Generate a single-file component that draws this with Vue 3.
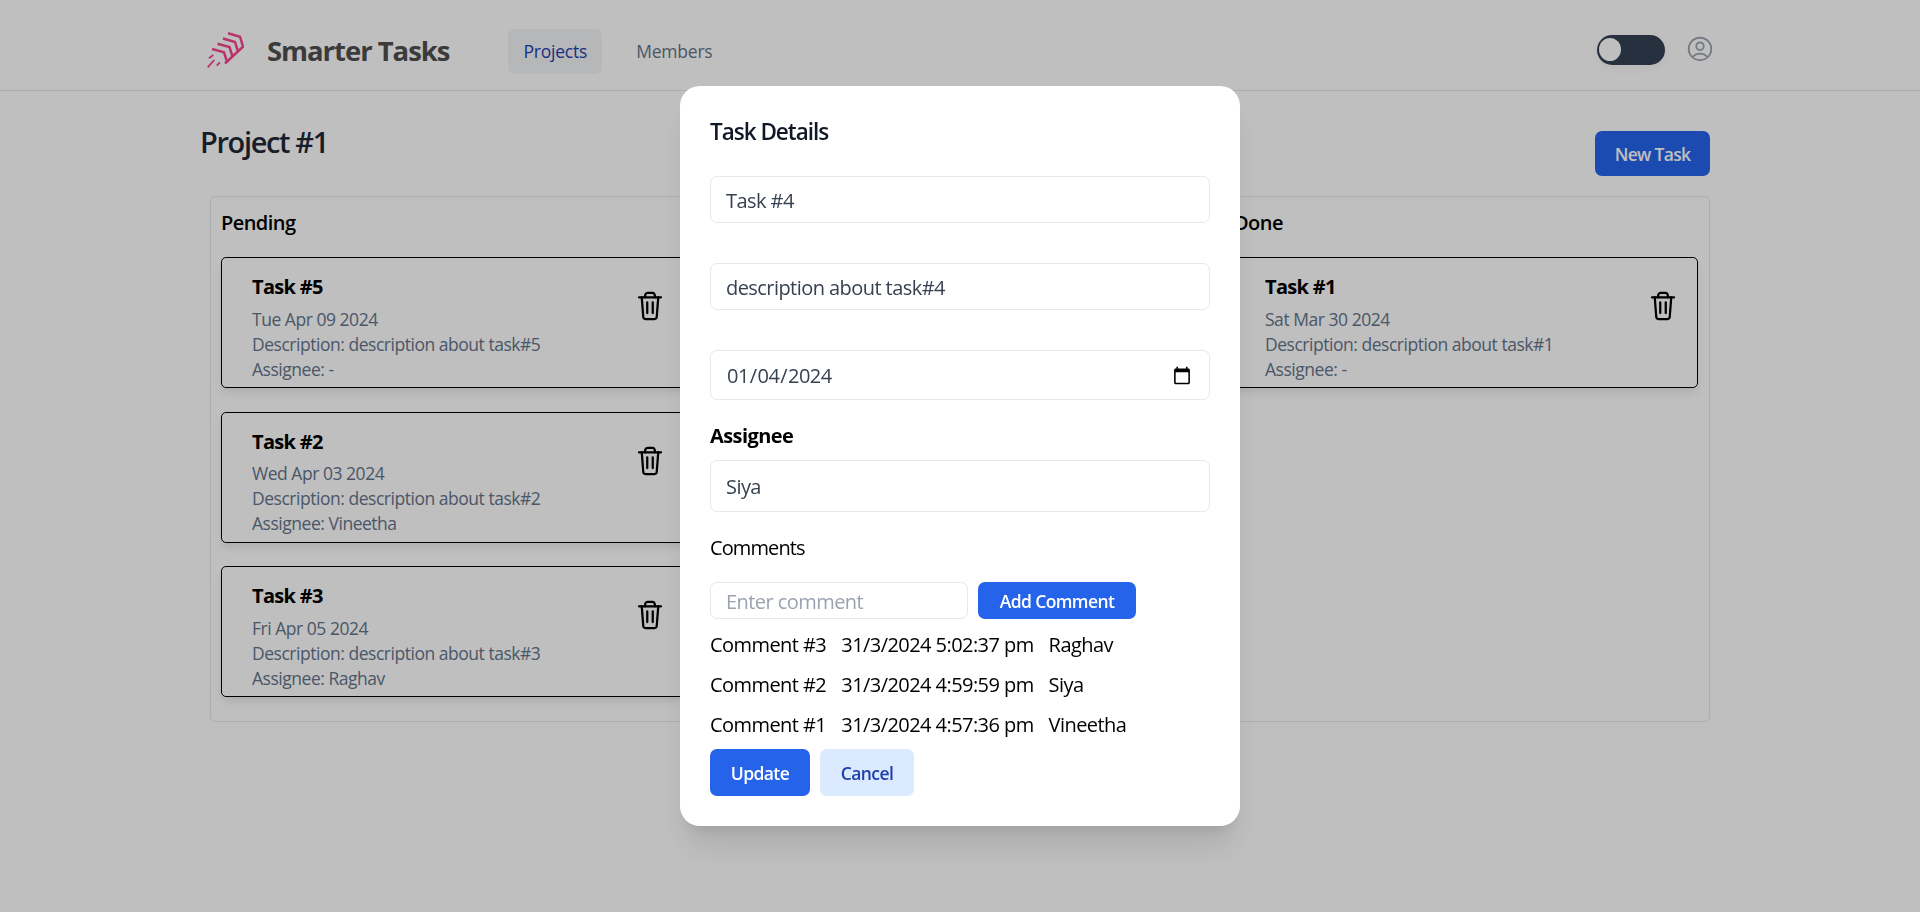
<script setup>
const columns = [
  {
    title: "Pending",
    tasks: [
      { name: "Task #5", date: "Tue Apr 09 2024", desc: "description about task#5", who: "-" },
      { name: "Task #2", date: "Wed Apr 03 2024", desc: "description about task#2", who: "Vineetha" },
      { name: "Task #3", date: "Fri Apr 05 2024", desc: "description about task#3", who: "Raghav" },
    ],
  },
  {
    title: "In progress",
    tasks: [{ name: "Task #4", date: "Thu Jan 04 2024", desc: "description about task#4", who: "Siya" }],
  },
  {
    title: "Done",
    tasks: [{ name: "Task #1", date: "Sat Mar 30 2024", desc: "description about task#1", who: "-" }],
  },
];

const comments = [
  { text: "Comment #3", at: "31/3/2024 5:02:37 pm", by: "Raghav" },
  { text: "Comment #2", at: "31/3/2024 4:59:59 pm", by: "Siya" },
  { text: "Comment #1", at: "31/3/2024 4:57:36 pm", by: "Vineetha" },
];
</script>

<template>
  <div class="page">
    <header class="topbar">
      <div class="topbar-inner">
        <svg class="logo" viewBox="0 0 37 36" fill="none" stroke="#fa4590" stroke-width="2.5" stroke-linejoin="miter">
          <path d="M21 1.3 L33 4.7 L36 14.7 L18 31.5" />
          <path d="M16 6.5 L28 10 L31 19.5" />
          <path d="M10.5 11.7 L22.5 15 L25.5 24.5" />
          <path d="M5 17 L17 20.3 L20 29.5" />
          <path d="M0.7 35.3 L7.3 28 M2 26.3 L6.3 23 M9.7 33.7 L13 30.3" stroke-width="1.8" />
        </svg>
        <span class="brand">Smarter Tasks</span>
        <nav class="nav">
          <a class="nav-link active">Projects</a>
          <a class="nav-link">Members</a>
        </nav>
        <div class="topbar-right">
          <div class="toggle"><span class="knob"></span></div>
          <svg class="user" viewBox="0 0 24 24" fill="none" stroke="#9ca3af" stroke-width="1.5">
            <path d="M17.982 18.725A7.488 7.488 0 0012 15.75a7.488 7.488 0 00-5.982 2.975m11.963 0a9 9 0 10-11.963 0m11.963 0A8.966 8.966 0 0112 21a8.966 8.966 0 01-5.982-2.275M15 9.75a3 3 0 11-6 0 3 3 0 016 0z" />
          </svg>
        </div>
      </div>
    </header>

    <main class="content">
      <div class="title-row">
        <h1 class="project-title">Project #1</h1>
        <button class="new-task">New Task</button>
      </div>
      <section class="board">
        <div v-for="col in columns" :key="col.title" class="column">
          <h2 class="col-title">{{ col.title }}</h2>
          <div class="cards">
            <article v-for="t in col.tasks" :key="t.name" class="card">
              <div class="card-text">
                <h3 class="card-name">{{ t.name }}</h3>
                <p>{{ t.date }}</p>
                <p>Description: {{ t.desc }}</p>
                <p>Assignee: {{ t.who }}</p>
              </div>
              <svg class="trash" viewBox="0 0 24 24" fill="none" stroke="#000" stroke-width="1.8" stroke-linecap="round" stroke-linejoin="round">
                <path d="M3.2 5h17.6" />
                <path d="M8 5c0-2.6.8-3.6 2-3.6h4c1.2 0 2 1 2 3.6" />
                <path d="M5.4 5l1.2 15.6c.1 1.1.8 1.8 1.8 1.8h7.2c1 0 1.7-.7 1.8-1.8L18.6 5" />
                <path d="M9.8 9v8.6M14.2 9v8.6" />
              </svg>
            </article>
          </div>
        </div>
      </section>
    </main>

    <div class="backdrop">
      <div class="modal">
        <h3 class="modal-title">Task Details</h3>
        <input class="field first" type="text" value="Task #4" />
        <input class="field second" type="text" value="description about task#4" />
        <input class="field date" type="date" value="2024-01-04" />
        <label class="assignee-label">Assignee</label>
        <input class="field assignee" type="text" value="Siya" />
        <p class="comments-title">Comments</p>
        <div class="comment-form">
          <input class="field comment-input" type="text" placeholder="Enter comment" />
          <button class="btn primary add">Add Comment</button>
        </div>
        <div class="comment-list">
          <div v-for="c in comments" :key="c.text" class="comment">
            <span>{{ c.text }}</span>
            <span>{{ c.at }}</span>
            <span>{{ c.by }}</span>
          </div>
        </div>
        <div class="actions">
          <button class="btn primary update">Update</button>
          <button class="btn secondary cancel">Cancel</button>
        </div>
      </div>
    </div>
  </div>
</template>

<style>
html,
body {
  margin: 0;
  background: #fff;
}
* {
  box-sizing: border-box;
}
</style>

<style scoped>
.page {
  min-height: 912px;
  font-family: "Open Sans", "Noto Sans", sans-serif;
  color: #000;
  letter-spacing: -0.035em;
}
.topbar {
  height: 91px;
  border-bottom: 1px solid #e5e7eb;
}
.topbar-inner {
  display: flex;
  align-items: center;
  height: 90px;
  padding: 10px 205px 0 207px;
}
.logo {
  width: 37px;
  height: 36px;
}
.brand {
  margin-left: 23px;
  font-size: 27.5px;
  font-weight: 700;
  color: #4f4f4f;
  letter-spacing: -0.038em;
}
.nav {
  display: flex;
  gap: 19px;
  margin-left: 59px;
  margin-top: 2px;
}
.nav-link {
  padding: 0 15px;
  height: 45px;
  line-height: 45px;
  font-size: 17.5px;
  font-weight: 525;
  letter-spacing: -0.012em;
  color: #64748b;
  border-radius: 7px;
}
.nav-link.active {
  background: #f3f4f6;
  color: #1e40af;
}
.topbar-right {
  display: flex;
  align-items: center;
  margin-left: auto;
  gap: 20px;
}
.toggle {
  width: 68px;
  height: 30px;
  padding: 3px 0 0 2px;
  background: #334155;
  border-radius: 15px;
  box-shadow: 0 4px 8px rgba(0, 0, 0, 0.04);
}
.knob {
  display: block;
  width: 22px;
  height: 23px;
  background: #fff;
  border-radius: 50%;
}
.user {
  width: 30px;
  height: 30px;
  margin-top: -2px;
}
.content {
  padding: 0 210px 0 200px;
}
.title-row {
  display: flex;
  justify-content: space-between;
  padding-top: 31px;
  height: 105px;
}
.project-title {
  margin: 0;
  font-size: 29px;
  line-height: 40px;
  font-weight: 550;
  letter-spacing: -0.047em;
  color: #1f2937;
}
.new-task {
  margin: 9px 0 0 0;
  width: 115px;
  height: 45px;
  background: #2563eb;
  color: #fff;
  border: 0;
  border-radius: 7px;
  font: inherit;
  font-size: 17.5px;
  font-weight: 600;
  letter-spacing: -0.04em;
}
.board {
  display: grid;
  grid-template-columns: repeat(3, 464px);
  gap: 42.5px;
  width: 1500px;
  height: 526px;
  margin-left: 10px;
  padding: 10px;
  border: 1px solid #e5e7eb;
  border-radius: 5px;
}
.col-title {
  margin: 0;
  height: 50px;
  padding-top: 1px;
  font-size: 20px;
  line-height: 30px;
  font-weight: 600;
}
.cards {
  display: flex;
  flex-direction: column;
  gap: 23.5px;
}
.card {
  display: flex;
  justify-content: space-between;
  height: 131px;
  padding: 14px 19px 0 30px;
  border: 1px solid #000;
  border-radius: 5px;
  box-shadow: 0 5px 8px -1px rgba(0, 0, 0, 0.1);
  font-size: 17.5px;
  line-height: 25px;
  letter-spacing: -0.027em;
  color: #64748b;
}
.card-name {
  margin: 0 0 4.5px;
  font-size: 20px;
  line-height: 30px;
  font-weight: 700;
  letter-spacing: -0.035em;
  color: #000;
}
.card p {
  margin: 0;
}
.trash {
  width: 30px;
  height: 30px;
  margin-top: 19px;
}
.backdrop {
  position: fixed;
  inset: 0;
  display: flex;
  align-items: center;
  justify-content: center;
  background: rgba(0, 0, 0, 0.25);
}
.modal {
  width: 560px;
  height: 740px;
  padding: 30px;
  background: #fff;
  border-radius: 20px;
  box-shadow: 0 25px 31px -6px rgba(0, 0, 0, 0.1), 0 10px 12px -7px rgba(0, 0, 0, 0.1);
}
.modal-title {
  margin: 0;
  height: 30px;
  font-size: 22.5px;
  line-height: 32px;
  font-weight: 600;
  letter-spacing: -0.045em;
  color: #111827;
}
.field {
  display: block;
  width: 100%;
  padding: 1px 15px 0;
  border: 1px solid #e5e7eb;
  border-radius: 7px;
  background: #fff;
  font: inherit;
  font-size: 20px;
  letter-spacing: inherit;
  color: #374151;
  outline: none;
}
.field::placeholder {
  color: #9ca3af;
}
.first {
  height: 47px;
  margin-top: 30px;
}
.second {
  height: 47px;
  margin-top: 40px;
}
.date {
  height: 50px;
  margin-top: 40px;
}
.assignee-label {
  display: block;
  margin-top: 21px;
  font-size: 20px;
  line-height: 30px;
  font-weight: 700;
}
.assignee {
  height: 52px;
  margin-top: 9px;
}
.comments-title {
  margin: 21px 0 0;
  font-size: 20px;
  line-height: 30px;
  letter-spacing: -0.045em;
}
.comment-form {
  display: flex;
  gap: 10px;
  margin-top: 19px;
}
.comment-input {
  flex: none;
  width: 258px;
  height: 37px;
}
.btn {
  border: 0;
  border-radius: 7px;
  font: inherit;
  font-size: 17.5px;
  font-weight: 600;
  letter-spacing: -0.035em;
}
.primary {
  background: #2563eb;
  color: #fff;
}
.secondary {
  background: #dbeafe;
  color: #1e40af;
}
.add {
  width: 158px;
  height: 37px;
}
.comment-list {
  margin-top: 11px;
}
.comment {
  display: flex;
  gap: 15px;
  height: 30px;
  margin-bottom: 10px;
  font-size: 20px;
  line-height: 30px;
  letter-spacing: -0.028em;
}
.comment:last-child {
  margin-bottom: 0;
}
.actions {
  display: flex;
  gap: 10px;
  margin-top: 9px;
}
.actions .btn {
  height: 47px;
}
.update {
  width: 100px;
}
.cancel {
  width: 94px;
}
</style>
